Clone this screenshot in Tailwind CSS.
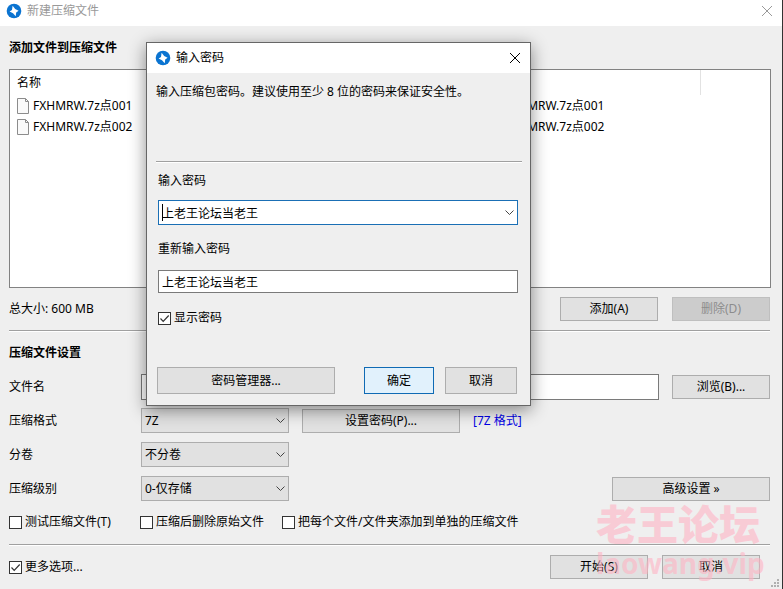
<!DOCTYPE html>
<html lang="zh-CN">
<head>
  <meta charset="UTF-8" />
  <meta name="viewport" content="width=device-width, initial-scale=1.0" />
  <title>新建压缩文件</title>
  <script src="https://cdn.jsdelivr.net/npm/@tailwindcss/browser@4"></script>
</head>
<body class="relative min-h-screen overflow-hidden bg-[#efefef] border-r border-[#333] font-['Noto_Sans','Noto_Sans_CJK_SC',sans-serif] text-[12px] leading-4 text-black">

  <!-- Title bar -->
  <header class="flex items-center h-[26px] pl-[6px] pr-[9px] pb-[5px] bg-white text-[#999]">
    <svg class="w-4 h-4 mr-[5px]" viewBox="0 0 16 16"><circle cx="8" cy="8" r="7.3" fill="#0b74d1"/><path d="M6.6 2.8 9.2 6 12.6 7.8 10.2 9.4 9.7 13.2 7 10.2 3.6 8.4 6 7Z" fill="#fff"/></svg>
    <h1 class="flex-1">新建压缩文件</h1>
    <button type="button" aria-label="关闭"><svg class="w-3 h-3" viewBox="0 0 12 12"><path d="M1 1 11 11M11 1 1 11" stroke="#999" fill="none"/></svg></button>
  </header>

  <main class="pl-[9px] pr-[11px] pt-[14px]">
    <h2 class="font-bold">添加文件到压缩文件</h2>

    <!-- File list -->
    <div class="mt-[13px] min-h-[219px] bg-white border border-[#828282]">
      <table class="w-full table-fixed border-collapse text-left">
        <thead>
          <tr class="h-[25px]">
            <th class="w-[489px] pl-[7px] font-normal">名称</th>
            <th class="w-[201px] border-r border-[#e2e2e2]"></th>
            <th></th>
          </tr>
        </thead>
        <tbody>
          <tr class="h-[21px]">
            <td class="pl-[7px]"><div class="flex items-center gap-1"><svg class="w-3 h-4" viewBox="0 0 12 16"><path d="M.5.5H8.5L11.5 3.5V15.5H.5Z" fill="#fafafa" stroke="#8c8c8c"/><path d="M8.5.5V3.5H11.5" fill="none" stroke="#8c8c8c"/></svg>FXHMRW.7z点001</div></td>
            <td class="pl-[6px]">FXHMRW.7z点001</td>
            <td></td>
          </tr>
          <tr class="h-[21px]">
            <td class="pl-[7px]"><div class="flex items-center gap-1"><svg class="w-3 h-4" viewBox="0 0 12 16"><path d="M.5.5H8.5L11.5 3.5V15.5H.5Z" fill="#fafafa" stroke="#8c8c8c"/><path d="M8.5.5V3.5H11.5" fill="none" stroke="#8c8c8c"/></svg>FXHMRW.7z点002</div></td>
            <td class="pl-[6px]">FXHMRW.7z点002</td>
            <td></td>
          </tr>
        </tbody>
      </table>
    </div>

    <div class="flex items-center mt-[9px] pr-px">
      <p class="flex-1">总大小: 600 MB</p>
      <button type="button" class="w-[98px] h-6 border border-[#adadad] bg-[#e1e1e1]">添加(A)</button>
      <button type="button" disabled class="w-[98px] h-6 ml-[14px] border border-[#bfbfbf] bg-[#cccccc] text-[#8c8c8c]">删除(D)</button>
    </div>
    <hr class="mt-[9px] mr-px h-[2px] border-t border-b border-t-[#a0a0a0] border-b-white" />

    <!-- Archive settings -->
    <h2 class="mt-[13px] font-bold">压缩文件设置</h2>

    <div class="flex items-center mt-[13px] pr-px">
      <label for="filename" class="w-[132px]">文件名</label>
      <input id="filename" type="text" value="FXHMRW.7z" class="flex-1 h-[26px] px-1 bg-white border border-[#7a7a7a]" />
      <button type="button" class="w-[98px] h-6 ml-[13px] border border-[#adadad] bg-[#e1e1e1]">浏览(B)...</button>
    </div>

    <div class="flex items-center mt-2 pr-px">
      <label for="format" class="w-[132px]">压缩格式</label>
      <div class="relative">
        <select id="format" class="appearance-none block w-[148px] h-[25px] pl-[3px] border border-[#adadad] bg-[#e1e1e1]"><option>7Z</option></select>
        <svg class="absolute right-1 top-2 w-[9px] h-[9px] pointer-events-none" viewBox="0 0 9 9"><path d="M.5 2.5 4.5 6.5 8.5 2.5" fill="none" stroke="#444"/></svg>
      </div>
      <button type="button" class="w-[158px] h-6 ml-[13px] border border-[#adadad] bg-[#e1e1e1]">设置密码(P)...</button>
      <a href="#" class="ml-[13px] text-[#0000e6]">[7Z 格式]</a>
    </div>

    <div class="flex items-center mt-[9px]">
      <label for="volume" class="w-[132px]">分卷</label>
      <div class="relative">
        <select id="volume" class="appearance-none block w-[148px] h-[25px] pl-[3px] border border-[#adadad] bg-[#e1e1e1]"><option>不分卷</option></select>
        <svg class="absolute right-1 top-2 w-[9px] h-[9px] pointer-events-none" viewBox="0 0 9 9"><path d="M.5 2.5 4.5 6.5 8.5 2.5" fill="none" stroke="#444"/></svg>
      </div>
    </div>

    <div class="flex items-center mt-[9px] pr-px">
      <label for="level" class="w-[132px]">压缩级别</label>
      <div class="relative">
        <select id="level" class="appearance-none block w-[148px] h-[25px] pl-[3px] border border-[#adadad] bg-[#e1e1e1]"><option>0-仅存储</option></select>
        <svg class="absolute right-1 top-2 w-[9px] h-[9px] pointer-events-none" viewBox="0 0 9 9"><path d="M.5 2.5 4.5 6.5 8.5 2.5" fill="none" stroke="#444"/></svg>
      </div>
      <button type="button" class="w-[158px] h-6 ml-auto border border-[#adadad] bg-[#e1e1e1]">高级设置 »</button>
    </div>

    <div class="flex mt-[13px]">
      <label class="flex items-center gap-[3px] w-[131px]"><input type="checkbox" class="appearance-none w-[13px] h-[13px] border border-[#333] bg-white" />测试压缩文件(T)</label>
      <label class="flex items-center gap-[3px] w-[142px]"><input type="checkbox" class="appearance-none w-[13px] h-[13px] border border-[#333] bg-white" />压缩后删除原始文件</label>
      <label class="flex items-center gap-[3px]"><input type="checkbox" class="appearance-none w-[13px] h-[13px] border border-[#333] bg-white" />把每个文件/文件夹添加到单独的压缩文件</label>
    </div>
    <hr class="mt-[14px] mr-px h-[2px] border-t border-b border-t-[#a0a0a0] border-b-white" />

    <div class="flex items-center mt-[9px] pr-[11px]">
      <label class="relative flex items-center gap-[3px]"><input type="checkbox" checked class="peer appearance-none w-[13px] h-[13px] border border-[#333] bg-white" /><svg class="absolute left-0 w-[13px] h-[13px] pointer-events-none invisible peer-checked:visible" viewBox="0 0 13 13"><path d="M2.5 6.5 5.2 9.3 10.7 3.5" fill="none" stroke="#333" stroke-width="1.2"/></svg>更多选项...</label>
      <button type="button" class="w-[98px] h-6 ml-auto border border-[#adadad] bg-[#e1e1e1]">开始(S)</button>
      <button type="button" class="w-[98px] h-6 ml-[14px] border border-[#adadad] bg-[#e1e1e1]">取消</button>
    </div>
  </main>

  <!-- Resize grip -->
  <svg class="absolute right-[3px] bottom-[2px] w-[8px] h-[8px]" viewBox="0 0 8 8" fill="#b0b0b0"><path d="M6 0h2v2H6zM6 3h2v2H6zM3 3h2v2H3zM6 6h2v2H6zM3 6h2v2H3zM0 6h2v2H0z"/></svg>

  <!-- Watermark -->
  <div class="absolute right-5 bottom-[9px] w-[166px] pointer-events-none font-bold text-[#ffb4c4]/60 whitespace-nowrap">
    <p class="font-black text-[41px] leading-[44px]">老王论坛</p>
    <p class="text-[28px] leading-[34px]">laowang.vip</p>
  </div>

  <!-- Password dialog -->
  <div role="dialog" aria-labelledby="pwTitle" class="absolute left-[146px] top-[42px] w-[385px] bg-[#efefef] border border-[#666] shadow-[0_4px_16px_rgba(0,0,0,0.45)]">
    <div class="flex items-center h-[30px] pl-2 pr-[9px] bg-white">
      <svg class="w-4 h-4 mr-[5px]" viewBox="0 0 16 16"><circle cx="8" cy="8" r="7.3" fill="#0b74d1"/><path d="M6.6 2.8 9.2 6 12.6 7.8 10.2 9.4 9.7 13.2 7 10.2 3.6 8.4 6 7Z" fill="#fff"/></svg>
      <h2 id="pwTitle" class="flex-1">输入密码</h2>
      <button type="button" aria-label="关闭"><svg class="w-3 h-3" viewBox="0 0 12 12"><path d="M1 1 11 11M11 1 1 11" stroke="#000" fill="none"/></svg></button>
    </div>
    <form class="pt-[11px] pb-[11px]">
      <p class="pl-[9px]">输入压缩包密码。建议使用至少 8 位的密码来保证安全性。</p>
      <hr class="mt-[61px] ml-[9px] mr-2 h-[2px] border-t border-b border-t-[#a0a0a0] border-b-white" />
      <div class="mt-[10px] pl-[11px] pr-3">
        <label for="password" class="block">输入密码</label>
        <div class="relative mt-[11px]">
          <input id="password" type="text" value="上老王论坛当老王" class="block w-full h-[25px] pl-[3px] pr-5 bg-white border border-[#1a6fb5]" />
          <span class="absolute left-1 top-1 w-px h-[17px] bg-black"></span>
          <button type="button" aria-label="展开" class="absolute right-1 top-2"><svg class="w-[9px] h-[9px]" viewBox="0 0 9 9"><path d="M.5 2.5 4.5 6.5 8.5 2.5" fill="none" stroke="#444"/></svg></button>
        </div>
        <label for="password2" class="block mt-4">重新输入密码</label>
        <input id="password2" type="text" value="上老王论坛当老王" class="block w-full h-[23px] mt-[13px] pl-[3px] bg-white border border-[#7a7a7a]" />
        <label class="relative flex items-center gap-[3px] mt-[17px]"><input type="checkbox" checked class="peer appearance-none w-[13px] h-[13px] border border-[#333] bg-white" /><svg class="absolute left-0 w-[13px] h-[13px] pointer-events-none invisible peer-checked:visible" viewBox="0 0 13 13"><path d="M2.5 6.5 5.2 9.3 10.7 3.5" fill="none" stroke="#333" stroke-width="1.2"/></svg>显示密码</label>
      </div>
      <div class="flex mt-[41px] pl-[10px] pr-[13px]">
        <button type="button" class="w-[178px] h-[27px] border border-[#adadad] bg-[#e1e1e1]">密码管理器...</button>
        <button type="submit" class="w-[70px] h-[27px] ml-auto border border-[#0f6ab4] bg-[#e1f1fc]">确定</button>
        <button type="button" class="w-[72px] h-[27px] ml-[11px] border border-[#adadad] bg-[#e1e1e1]">取消</button>
      </div>
    </form>
  </div>
</body>
</html>
